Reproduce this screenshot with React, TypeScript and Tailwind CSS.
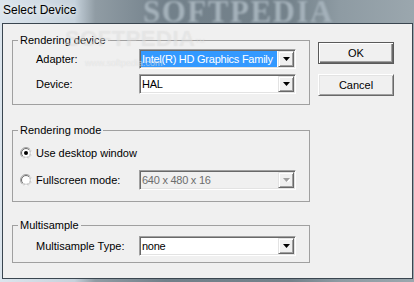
import React from 'react';

const raised =
  'border border-t-[#e3e3e3] border-l-[#e3e3e3] border-b-[#696969] border-r-[#696969] shadow-[inset_1px_1px_0_#fff,inset_-1px_-1px_0_#a0a0a0]';

const sunken =
  'border border-t-[#a0a0a0] border-l-[#a0a0a0] border-b-white border-r-white shadow-[inset_1px_1px_0_#696969,inset_-1px_-1px_0_#e3e3e3]';

const Arrow: React.FC<{ disabled?: boolean }> = ({ disabled }) => (
  <svg width="7" height="4" viewBox="0 0 7 4" className="block">
    {disabled && <polygon points="1,1 8,1 4.5,5" fill="#fff" />}
    <polygon points="0,0 7,0 3.5,4" fill={disabled ? '#a0a0a0' : '#000'} />
  </svg>
);

interface ComboProps {
  value: string;
  selected?: boolean;
  disabled?: boolean;
}

const Combo: React.FC<ComboProps> = ({ value, selected, disabled }) => (
  <div className={`flex h-[20px] w-[157px] p-[1px] ${sunken} ${disabled ? 'bg-[#f0f0f0]' : 'bg-white'}`}>
    <div
      className={`mr-[1px] flex flex-1 items-center overflow-hidden whitespace-nowrap pl-[1px] tracking-[-0.25px] ${
        selected ? 'bg-[#3399ff] text-white' : disabled ? 'text-[#6d6d6d]' : 'text-black'
      }`}
    >
      {value}
    </div>
    <div className={`flex h-full w-[16px] items-center justify-center bg-[#f0f0f0] ${raised}`}>
      <Arrow disabled={disabled} />
    </div>
  </div>
);

const Radio: React.FC<{ checked?: boolean }> = ({ checked }) => (
  <svg width="12" height="12" viewBox="0 0 12 12" className="block shrink-0">
    <circle cx="6" cy="6" r="5.5" fill="#fff" stroke="#a0a0a0" />
    <path d="M9.9 2.1 A5.5 5.5 0 0 1 2.1 9.9" fill="none" stroke="#fff" />
    <circle cx="6" cy="6" r="4.5" fill="none" stroke="#696969" />
    <path d="M9.2 2.8 A4.5 4.5 0 0 1 2.8 9.2" fill="none" stroke="#e3e3e3" />
    {checked && <circle cx="6" cy="6" r="2" fill="#000" />}
  </svg>
);

const Group: React.FC<{ title: string; className?: string; children: React.ReactNode }> = ({
  title,
  className,
  children,
}) => (
  <fieldset className={`w-[298px] border border-[#a0a0a0] ${className ?? ''}`}>
    <legend className="ml-[5px] px-[2px] leading-[13px]">{title}</legend>
    {children}
  </fieldset>
);

const Row: React.FC<{ label: string; children: React.ReactNode }> = ({ label, children }) => (
  <div className="flex h-[20px] items-center">
    <span className="w-[103px]">{label}</span>
    {children}
  </div>
);

const PushButton: React.FC<{ label: string; isDefault?: boolean }> = ({ label, isDefault }) => (
  <button
    className={`flex h-[22px] w-[76px] items-center justify-center bg-[#f0f0f0] text-black ${
      isDefault
        ? 'border border-[#5a5a5a] shadow-[inset_1px_1px_0_#fff,inset_-1px_-1px_0_#696969,inset_-2px_-2px_0_#a0a0a0]'
        : 'border border-t-white border-l-white border-b-[#696969] border-r-[#696969] shadow-[inset_1px_1px_0_#e3e3e3,inset_-1px_-1px_0_#a0a0a0]'
    }`}
  >
    {label}
  </button>
);

export default function App() {
  return (
    <div className="flex h-[282px] w-[414px] flex-col overflow-hidden bg-[linear-gradient(90deg,#dce5ed_0%,#c6d2dc_18%,#909ca4_23%,#72808a_40%,#74828b_70%,#8e9ba3_82%,#9ba7ae_100%)] font-['Liberation_Sans',Arial,sans-serif] text-[11px] text-black">
      {/* title bar */}
      <div className="relative h-[23px] shrink-0">
        <span className="pointer-events-none absolute left-[143px] top-[-4px] select-none whitespace-nowrap font-['Liberation_Serif',serif] text-[31px] font-bold leading-[31px] tracking-[1.5px] text-[#a4b1ba] blur-[1.2px]">
          SOFTPEDIA
        </span>
        <span className="relative pl-[3px] text-[12px] leading-[21px] text-black [text-shadow:0_0_6px_#fff]">
          Select Device
        </span>
      </div>

      {/* client area */}
      <div className="relative mb-[3px] ml-[2px] mr-[1px] flex flex-1 border border-[#3a4650] bg-[#f0f0f0] pl-[9px] pt-[10px]">
        <div className="flex flex-col">
          <Group title="Rendering device">
            <div className="flex flex-col gap-[5px] pb-[10px] pl-[23px] pt-[2px]">
              <Row label="Adapter:">
                <Combo value="Intel(R) HD Graphics Family" selected />
              </Row>
              <Row label="Device:">
                <Combo value="HAL" />
              </Row>
            </div>
          </Group>

          <Group title="Rendering mode" className="mt-[19px]">
            <div className="flex flex-col gap-[7px] pb-[11px] pl-[7px] pt-[6px]">
              <div className="flex h-[20px] items-center">
                <Radio checked />
                <span className="ml-[4px]">Use desktop window</span>
              </div>
              <div className="flex h-[20px] items-center">
                <Radio />
                <span className="ml-[4px] w-[103px]">Fullscreen mode:</span>
                <Combo value="640 x 480 x 16" disabled />
              </div>
            </div>
          </Group>

          <Group title="Multisample" className="mt-[17px]">
            <div className="flex flex-col pb-[6px] pl-[23px] pt-[4px]">
              <Row label="Multisample Type:">
                <Combo value="none" />
              </Row>
            </div>
          </Group>
        </div>

        <div className="ml-[8px] mt-[8px] flex flex-col gap-[10px]">
          <PushButton label="OK" isDefault />
          <PushButton label="Cancel" />
        </div>

        {/* faint watermark over the dialog */}
        <div className="pointer-events-none absolute left-[62px] top-[4px] select-none text-[22px] font-bold leading-[22px] tracking-[0.5px] text-white/30 [text-shadow:0_0_1px_rgba(180,180,180,0.35)]">
          SOFTPEDIA<sup className="text-[6px] font-normal">TM</sup>
        </div>
        <div className="pointer-events-none absolute left-[82px] top-[35px] select-none text-[9px] leading-[9px] text-white/40 [text-shadow:0_0_1px_rgba(180,180,180,0.4)]">
          www.softpedia.com
        </div>
      </div>
    </div>
  );
}
